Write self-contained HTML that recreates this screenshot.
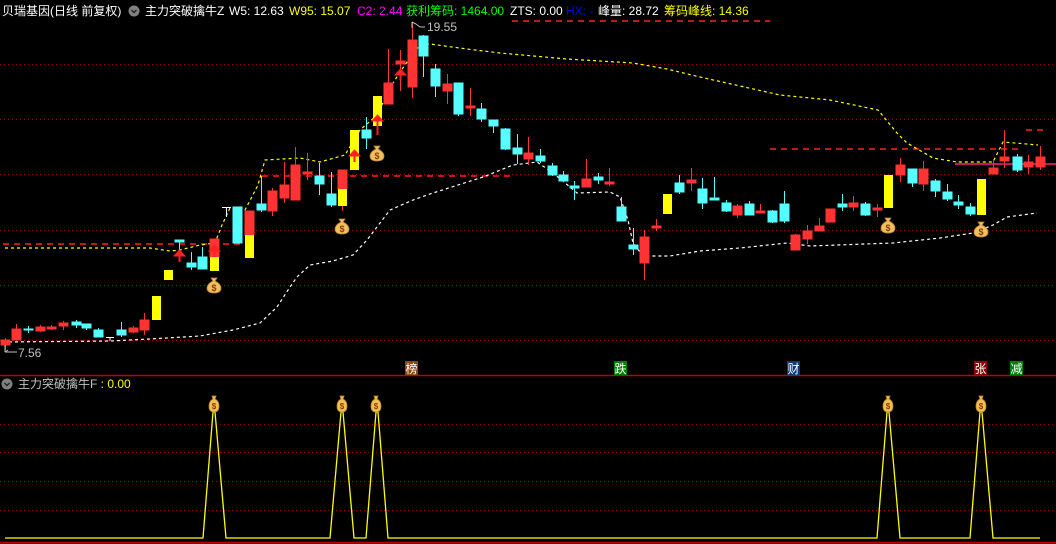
<!DOCTYPE html>
<html><head><meta charset="utf-8"><style>
html,body{margin:0;padding:0;background:#000;width:1056px;height:544px;overflow:hidden}
svg{display:block}
text{font-family:"Liberation Sans","Noto Sans CJK SC",sans-serif}
</style></head><body>
<svg width="1056" height="544" viewBox="0 0 1056 544" xmlns="http://www.w3.org/2000/svg">
<defs>
<g id="bag"><path d="M-3,-7 L3,-7 L1,-4 Q7,-1 7,3 Q7,8 0,8 Q-7,8 -7,3 Q-7,-1 -1,-4 Z" fill="#f0c060" stroke="#c08030" stroke-width="0.8"/><text x="0" y="6" font-size="9" fill="#8a3a10" text-anchor="middle" font-weight="bold">$</text></g>
<g id="bag2"><path d="M-2,-8 L2,-8 L1,-5 Q5,-3 5,2 Q5,8 0,8 Q-5,8 -5,2 Q-5,-3 -1,-5 Z" fill="#f0c050" stroke="#c08030" stroke-width="0.8"/><text x="0" y="5" font-size="8" fill="#8a3a10" text-anchor="middle" font-weight="bold">$</text></g>
</defs>
<!-- grid -->
<g stroke="#a00000" stroke-width="1" stroke-dasharray="1,3">
<line x1="0" y1="64.5" x2="1056" y2="64.5"/><line x1="0" y1="119.5" x2="1056" y2="119.5"/>
<line x1="0" y1="174.5" x2="1056" y2="174.5"/><line x1="0" y1="230.5" x2="1056" y2="230.5"/>
<line x1="0" y1="285.5" x2="1056" y2="285.5"/><line x1="0" y1="340.5" x2="1056" y2="340.5"/>
<line x1="0" y1="424.5" x2="1056" y2="424.5"/><line x1="0" y1="452.5" x2="1056" y2="452.5"/>
<line x1="0" y1="481.5" x2="1056" y2="481.5"/><line x1="0" y1="510.5" x2="1056" y2="510.5"/>
</g>
<line x1="0" y1="375.5" x2="1056" y2="375.5" stroke="#c00000" stroke-width="1.5"/>
<line x1="0" y1="542.5" x2="1056" y2="542.5" stroke="#c00000" stroke-width="1.5"/>
<!-- red dashed levels -->
<g stroke="#ff2020" stroke-width="1.5" stroke-dasharray="6,5">
<line x1="3" y1="244" x2="240" y2="244"/>
<line x1="262" y1="176" x2="510" y2="176"/>
<line x1="512" y1="21" x2="770" y2="21"/>
<line x1="770" y1="149" x2="1020" y2="149"/>
<line x1="1026" y1="130" x2="1046" y2="130"/>
</g>
<line x1="955" y1="164" x2="1056" y2="164" stroke="#ff2080" stroke-width="1.5"/>
<!-- yellow dashed line -->
<polyline fill="none" stroke="#ffff00" stroke-width="1.2" stroke-dasharray="3,3" points="5,248 150,248 170,251 180,250 200,245 215,243 222,225 230,208 245,210 258,185 265,160 300,158 320,162 345,155 360,130 377,115 390,88 400,72 412,55 420,45 430,44 467,49 500,53 567,59 633,63 667,69 700,77 780,95 830,100 878,110 897,133 907,143 933,158 957,162 993,162 1003,142 1038,145"/>
<!-- white dashed line -->
<polyline fill="none" stroke="#ffffff" stroke-width="1.2" stroke-dasharray="3,3" points="3,342 110,341 150,339 200,336 233,330 260,323 277,307 290,287 297,277 310,265 333,261 353,255 367,240 380,223 390,210 413,200 433,193 483,177 513,165 537,162 553,173 570,187 577,193 610,192 620,197 628,220 633,243 643,256 670,256 700,251 740,248 787,243 810,246 893,243 940,238 973,233 993,225 1007,217 1037,213"/>
<!-- candles -->
<g stroke-width="1">
<!-- format: wick line + body rect -->
<g stroke="#ff3333" fill="#ff3333">
<line x1="5.5" y1="338" x2="5.5" y2="350"/><rect x="1" y="340" width="9" height="5"/>
<line x1="16.5" y1="324" x2="16.5" y2="340"/><rect x="12" y="329" width="9" height="11"/>
<line x1="40.5" y1="325" x2="40.5" y2="332"/><rect x="36" y="327" width="9" height="4"/>
<line x1="51.5" y1="325" x2="51.5" y2="330"/><rect x="47" y="327" width="9" height="2"/>
<line x1="63.5" y1="321" x2="63.5" y2="330"/><rect x="59" y="323" width="9" height="3"/>
<line x1="133.5" y1="326" x2="133.5" y2="333"/><rect x="129" y="328" width="9" height="4"/>
<line x1="144.5" y1="313" x2="144.5" y2="335"/><rect x="140" y="320" width="9" height="10"/>
<line x1="214.5" y1="239" x2="214.5" y2="262"/><rect x="210" y="239" width="9" height="18"/>
<line x1="249.5" y1="211" x2="249.5" y2="258"/><rect x="245" y="211" width="9" height="24"/>
<line x1="272.5" y1="188" x2="272.5" y2="216"/><rect x="268" y="191" width="9" height="20"/>
<line x1="284.5" y1="162" x2="284.5" y2="203"/><rect x="280" y="185" width="9" height="13"/>
<line x1="295.5" y1="147" x2="295.5" y2="200"/><rect x="291" y="165" width="9" height="35"/>
<line x1="307.5" y1="153" x2="307.5" y2="180"/><rect x="303" y="172" width="9" height="2"/>
<line x1="342.5" y1="170" x2="342.5" y2="211"/><rect x="338" y="170" width="9" height="19"/>
<line x1="388.5" y1="49" x2="388.5" y2="104"/><rect x="384" y="83" width="9" height="21"/>
<line x1="400.5" y1="50" x2="400.5" y2="91"/><rect x="396" y="61" width="9" height="3"/>
<line x1="412.5" y1="23" x2="412.5" y2="98"/><rect x="408" y="40" width="9" height="47"/>
<line x1="447.5" y1="74" x2="447.5" y2="104"/><rect x="443" y="84" width="9" height="7"/>
<line x1="470.5" y1="88" x2="470.5" y2="116"/><rect x="466" y="106" width="9" height="2"/>
<line x1="528.5" y1="137" x2="528.5" y2="165"/><rect x="524" y="153" width="9" height="6"/>
<line x1="586.5" y1="159" x2="586.5" y2="187"/><rect x="582" y="179" width="9" height="8"/>
<line x1="609.5" y1="168" x2="609.5" y2="186"/><rect x="605" y="182" width="9" height="2"/>
<line x1="644.5" y1="230" x2="644.5" y2="280"/><rect x="640" y="237" width="9" height="26"/>
<line x1="656.5" y1="219" x2="656.5" y2="231"/><rect x="652" y="226" width="9" height="2"/>
<line x1="691.5" y1="168" x2="691.5" y2="191"/><rect x="687" y="180" width="9" height="3"/>
<line x1="737.5" y1="204" x2="737.5" y2="218"/><rect x="733" y="206" width="9" height="9"/>
<line x1="760.5" y1="204" x2="760.5" y2="213"/><rect x="756" y="211" width="9" height="2"/>
<line x1="795.5" y1="234" x2="795.5" y2="250"/><rect x="791" y="235" width="9" height="15"/>
<line x1="807.5" y1="225" x2="807.5" y2="244"/><rect x="803" y="231" width="9" height="8"/>
<line x1="819.5" y1="218" x2="819.5" y2="231"/><rect x="815" y="226" width="9" height="5"/>
<line x1="830.5" y1="209" x2="830.5" y2="222"/><rect x="826" y="209" width="9" height="13"/>
<line x1="853.5" y1="196" x2="853.5" y2="211"/><rect x="849" y="203" width="9" height="4"/>
<line x1="877.5" y1="204" x2="877.5" y2="217"/><rect x="873" y="208" width="9" height="2"/>
<line x1="900.5" y1="158" x2="900.5" y2="182"/><rect x="896" y="165" width="9" height="10"/>
<line x1="923.5" y1="161" x2="923.5" y2="191"/><rect x="919" y="169" width="9" height="15"/>
<line x1="993.5" y1="160" x2="993.5" y2="174"/><rect x="989" y="168" width="9" height="6"/>
<line x1="1004.5" y1="130" x2="1004.5" y2="168"/><rect x="1000" y="157" width="9" height="4"/>
<line x1="1028.5" y1="155" x2="1028.5" y2="174"/><rect x="1024" y="162" width="9" height="5"/>
<line x1="1040.5" y1="146" x2="1040.5" y2="170"/><rect x="1036" y="157" width="9" height="10"/>
</g>
<g stroke="#55ffff" fill="#55ffff">
<line x1="28.5" y1="326" x2="28.5" y2="333"/><rect x="24" y="329" width="9" height="1"/>
<line x1="76.5" y1="320" x2="76.5" y2="328"/><rect x="72" y="322" width="9" height="3"/>
<line x1="86.5" y1="324" x2="86.5" y2="330"/><rect x="82" y="324" width="9" height="4"/>
<line x1="98.5" y1="328" x2="98.5" y2="337"/><rect x="94" y="330" width="9" height="7"/>
<line x1="121.5" y1="322" x2="121.5" y2="337"/><rect x="117" y="330" width="9" height="5"/>
<line x1="179.5" y1="241" x2="179.5" y2="250"/><rect x="175" y="240" width="9" height="2"/>
<line x1="191.5" y1="252" x2="191.5" y2="270"/><rect x="187" y="263" width="9" height="4"/>
<line x1="202.5" y1="247" x2="202.5" y2="269"/><rect x="198" y="257" width="9" height="12"/>
<rect x="233" y="207" width="9" height="36"/>
<line x1="261.5" y1="176" x2="261.5" y2="212"/><rect x="257" y="204" width="9" height="6"/>
<line x1="319.5" y1="163" x2="319.5" y2="195"/><rect x="315" y="176" width="9" height="8"/>
<line x1="331.5" y1="172" x2="331.5" y2="207"/><rect x="327" y="194" width="9" height="11"/>
<line x1="366.5" y1="117" x2="366.5" y2="149"/><rect x="362" y="130" width="9" height="8"/>
<line x1="423.5" y1="35" x2="423.5" y2="77"/><rect x="419" y="36" width="9" height="20"/>
<line x1="435.5" y1="64" x2="435.5" y2="97"/><rect x="431" y="69" width="9" height="17"/>
<line x1="458.5" y1="83" x2="458.5" y2="116"/><rect x="454" y="83" width="9" height="31"/>
<line x1="481.5" y1="103" x2="481.5" y2="122"/><rect x="477" y="109" width="9" height="10"/>
<line x1="493.5" y1="120" x2="493.5" y2="133"/><rect x="489" y="120" width="9" height="6"/>
<line x1="505.5" y1="128" x2="505.5" y2="150"/><rect x="501" y="129" width="9" height="20"/>
<line x1="517.5" y1="134" x2="517.5" y2="164"/><rect x="513" y="148" width="9" height="6"/>
<line x1="540.5" y1="149" x2="540.5" y2="163"/><rect x="536" y="156" width="9" height="5"/>
<line x1="552.5" y1="163" x2="552.5" y2="176"/><rect x="548" y="166" width="9" height="9"/>
<line x1="563.5" y1="171" x2="563.5" y2="182"/><rect x="559" y="175" width="9" height="6"/>
<line x1="574.5" y1="181" x2="574.5" y2="200"/><rect x="570" y="186" width="9" height="2"/>
<line x1="598.5" y1="173" x2="598.5" y2="184"/><rect x="594" y="177" width="9" height="3"/>
<line x1="621.5" y1="197" x2="621.5" y2="221"/><rect x="617" y="207" width="9" height="14"/>
<line x1="633.5" y1="228" x2="633.5" y2="255"/><rect x="629" y="245" width="9" height="4"/>
<line x1="679.5" y1="175" x2="679.5" y2="194"/><rect x="675" y="183" width="9" height="9"/>
<line x1="702.5" y1="178" x2="702.5" y2="209"/><rect x="698" y="189" width="9" height="14"/>
<line x1="714.5" y1="177" x2="714.5" y2="200"/><rect x="710" y="198" width="9" height="2"/>
<line x1="726.5" y1="200" x2="726.5" y2="212"/><rect x="722" y="203" width="9" height="8"/>
<line x1="749.5" y1="201" x2="749.5" y2="215"/><rect x="745" y="204" width="9" height="11"/>
<line x1="772.5" y1="210" x2="772.5" y2="223"/><rect x="768" y="211" width="9" height="11"/>
<line x1="784.5" y1="191" x2="784.5" y2="223"/><rect x="780" y="204" width="9" height="17"/>
<line x1="842.5" y1="194" x2="842.5" y2="211"/><rect x="838" y="204" width="9" height="3"/>
<line x1="865.5" y1="202" x2="865.5" y2="216"/><rect x="861" y="204" width="9" height="11"/>
<line x1="912.5" y1="169" x2="912.5" y2="187"/><rect x="908" y="169" width="9" height="14"/>
<line x1="935.5" y1="179" x2="935.5" y2="197"/><rect x="931" y="181" width="9" height="10"/>
<line x1="947.5" y1="184" x2="947.5" y2="201"/><rect x="943" y="192" width="9" height="7"/>
<line x1="958.5" y1="195" x2="958.5" y2="209"/><rect x="954" y="202" width="9" height="3"/>
<line x1="970.5" y1="203" x2="970.5" y2="216"/><rect x="966" y="207" width="9" height="7"/>
<line x1="1017.5" y1="154" x2="1017.5" y2="172"/><rect x="1013" y="157" width="9" height="13"/>
</g>
<g fill="#ffff00">
<rect x="152" y="296" width="9" height="24"/>
<rect x="164" y="270" width="9" height="10"/>
<rect x="210" y="257" width="9" height="14"/>
<rect x="245" y="235" width="9" height="23"/>
<rect x="338" y="189" width="9" height="17"/>
<rect x="350" y="130" width="9" height="40"/>
<rect x="373" y="96" width="9" height="30"/>
<rect x="663" y="194" width="9" height="20"/>
<rect x="884" y="175" width="9" height="33"/>
<rect x="977" y="179" width="9" height="36"/>
</g>
<g stroke="#fff" fill="none">
<path d="M106,337.5 H114 M110,337.5 V341"/>
<path d="M222,207.5 H231 M226.5,207.5 V217"/>
</g>
<!-- arrows -->
<g fill="#ff2020" stroke="#ff2020">
<path d="M174,256 L179.5,250 L185,256 Z"/><line x1="179.5" y1="255" x2="179.5" y2="262" stroke-width="2"/>
<path d="M209,251 L214.5,245 L220,251 Z"/><line x1="214.5" y1="250" x2="214.5" y2="257" stroke-width="2"/>
<path d="M349,156 L354.5,150 L360,156 Z"/><line x1="354.5" y1="155" x2="354.5" y2="162" stroke-width="2"/>
<path d="M372,121 L377.5,115 L383,121 Z"/><line x1="377.5" y1="120" x2="377.5" y2="135" stroke-width="2"/>
<path d="M395,75 L400.5,69 L406,75 Z"/><line x1="400.5" y1="74" x2="400.5" y2="80" stroke-width="2"/>
</g>
</g>
<!-- bags -->
<use href="#bag" x="214" y="285"/><use href="#bag" x="342" y="226"/><use href="#bag" x="377" y="153"/>
<use href="#bag" x="888" y="225"/><use href="#bag" x="981" y="229"/>
<!-- labels -->
<text x="427" y="31" font-size="12" fill="#c0c0c0">19.55</text>
<path d="M412,22 V28 M412,22 L416,24 L420,27 L425,27" stroke="#c0c0c0" fill="none"/>
<text x="18" y="357" font-size="12" fill="#c0c0c0">7.56</text>
<path d="M5,345 V352 M5,352 H17 M5,352 l3,-2" stroke="#c0c0c0" fill="none"/>
<!-- header -->
<text y="15" font-size="12">
<tspan x="2" fill="#ffffff">贝瑞基因(日线 前复权)</tspan>
<tspan x="145" fill="#ffffff">主力突破擒牛Z</tspan>
<tspan x="229" fill="#ffffff">W5: 12.63</tspan>
<tspan x="289" fill="#ffff00">W95: 15.07</tspan>
<tspan x="357" fill="#ff00ff">C2: 2.44</tspan>
<tspan x="406" fill="#00ff00">获利筹码: 1464.00</tspan>
<tspan x="510" fill="#ffffff">ZTS: 0.00</tspan>
<tspan x="566" fill="#0000ff">HX: -</tspan>
<tspan x="598" fill="#ffffff">峰量: 28.72</tspan>
<tspan x="664" fill="#ffff00">筹码峰线: 14.36</tspan>
</text>
<circle cx="134" cy="11" r="5.5" fill="#808080"/><path d="M131.5,10 L134,12.5 L136.5,10" stroke="#222" fill="none" stroke-width="1.4"/>
<circle cx="7" cy="384" r="5.5" fill="#808080"/><path d="M4.5,383 L7,385.5 L9.5,383" stroke="#222" fill="none" stroke-width="1.4"/>
<text x="18" y="388" font-size="12" fill="#c0c0c0">主力突破擒牛F <tspan fill="#ffff00">: 0.00</tspan></text>
<!-- tags -->
<g font-size="12" fill="#fff" text-anchor="middle">
<rect x="405" y="361" width="13" height="14" fill="#8b4513"/><text x="411.5" y="373">榜</text>
<rect x="614" y="361" width="13" height="14" fill="#008000"/><text x="620.5" y="373">跌</text>
<rect x="787" y="361" width="13" height="14" fill="#0a3a7a"/><text x="793.5" y="373">财</text>
<rect x="974" y="361" width="13" height="14" fill="#8b0000"/><text x="980.5" y="373">张</text>
<rect x="1010" y="361" width="13" height="14" fill="#008000"/><text x="1016.5" y="373">减</text>
</g>
<!-- bottom indicator -->
<polyline fill="none" stroke="#ffff00" stroke-width="1.3" points="5,538 203,538 213,412 215,412 226,538 330,538 341,412 343,412 354,538 366,538 376,412 378,412 388,538 877,538 887,412 889,412 900,538 970,538 980,412 982,412 993,538 1040,538"/>
<use href="#bag2" x="214" y="404"/><use href="#bag2" x="342" y="404"/><use href="#bag2" x="376" y="404"/>
<use href="#bag2" x="888" y="404"/><use href="#bag2" x="981" y="404"/>
</svg>
</body></html>
